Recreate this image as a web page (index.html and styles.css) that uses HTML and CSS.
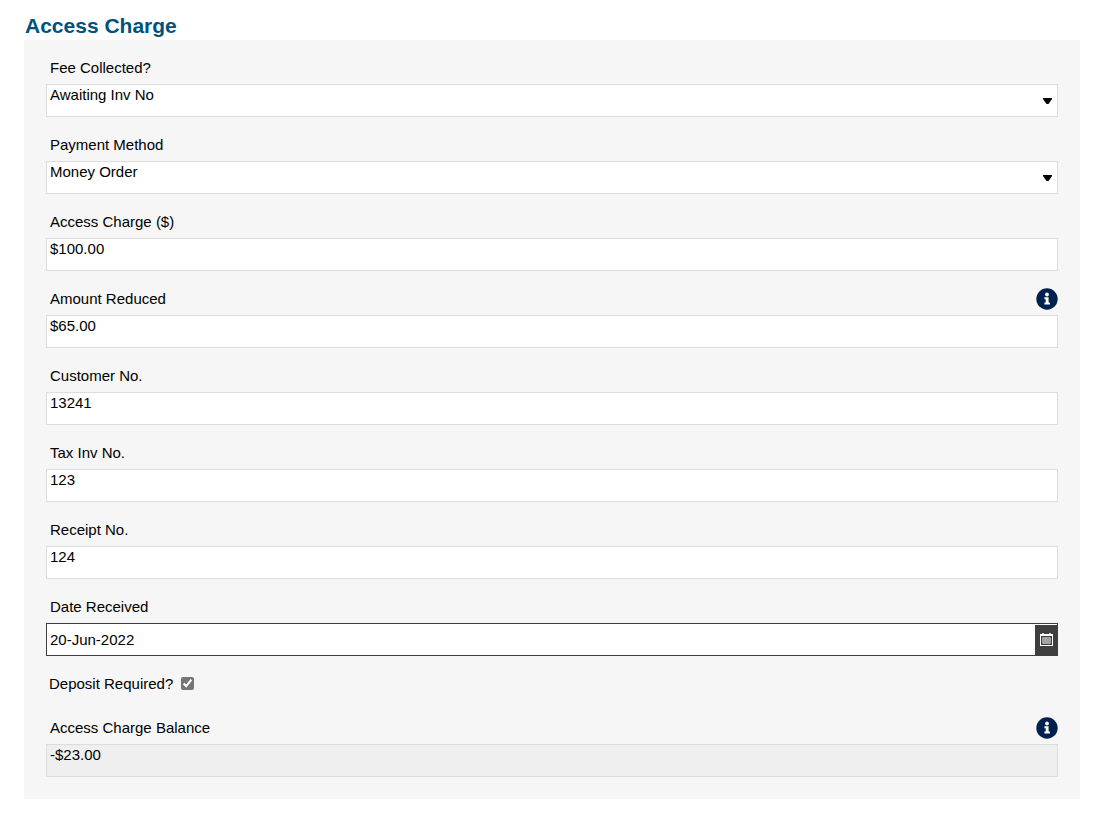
FILE: index.html
```html
<!DOCTYPE html>
<html lang="en">
<head>
    <meta charset="UTF-8">
    <meta name="viewport" content="width=device-width, initial-scale=1.0">
    <title>Access Charge</title>
    <link rel="stylesheet" href="styles.css">
</head>
<body>

<svg class="sprite" aria-hidden="true">
    <symbol id="arrow" viewBox="0 0 9 6">
        <path d="M0 0h9v1L5.500 6h-2L0 1z" fill="#000"/>
    </symbol>
    <symbol id="info" viewBox="0 0 22 22">
        <circle cx="11" cy="11" r="10.7" fill="#00204d"/>
        <circle cx="11" cy="6.500" r="1.900" fill="#fff"/>
        <path d="M8.400 9.200h4.200v5.300h1.300v2H8.400v-2h1.300v-3.300H8.400z" fill="#fff"/>
    </symbol>
    <symbol id="calendar" viewBox="0 0 13 13">
        <path d="M2 0h2v1H2zM9 0h2v1H9z" fill="#ccc"/>
        <path d="M0 1h13v12H0zM1 3v9h11V3z" fill="#fff" fill-rule="evenodd"/>
        <path d="M3 4h7v1h1v5h-1v1H3v-1H2V5h1z" fill="#a3a3a3"/>
        <path d="M2 4h1v1H2zM10 4h1v1h-1zM2 10h1v1H2zM10 10h1v1h-1z" fill="#777"/>
    </symbol>
</svg>

<form class="charge-form">
    <h2>Access Charge</h2>

    <div class="panel">
        <div class="field">
            <div class="label-row">
                <label for="feeCollected">Fee Collected?</label>
            </div>
            <div class="select-box">
                <select id="feeCollected">
                    <option>Awaiting Inv No</option>
                </select>
                <svg class="arrow"><use href="#arrow"/></svg>
            </div>
        </div>

        <div class="field">
            <div class="label-row">
                <label for="paymentMethod">Payment Method</label>
            </div>
            <div class="select-box">
                <select id="paymentMethod">
                    <option>Money Order</option>
                </select>
                <svg class="arrow"><use href="#arrow"/></svg>
            </div>
        </div>

        <div class="field">
            <div class="label-row">
                <label for="accessCharge">Access Charge ($)</label>
            </div>
            <input type="text" id="accessCharge" value="$100.00">
        </div>

        <div class="field">
            <div class="label-row">
                <label for="amountReduced">Amount Reduced</label>
                <button type="button" class="info" aria-label="About amount reduced"><svg><use href="#info"/></svg></button>
            </div>
            <input type="text" id="amountReduced" value="$65.00">
        </div>

        <div class="field">
            <div class="label-row">
                <label for="customerNo">Customer No.</label>
            </div>
            <input type="text" id="customerNo" value="13241">
        </div>

        <div class="field">
            <div class="label-row">
                <label for="taxInvNo">Tax Inv No.</label>
            </div>
            <input type="text" id="taxInvNo" value="123">
        </div>

        <div class="field">
            <div class="label-row">
                <label for="receiptNo">Receipt No.</label>
            </div>
            <input type="text" id="receiptNo" value="124">
        </div>

        <div class="field">
            <div class="label-row">
                <label for="dateReceived">Date Received</label>
            </div>
            <div class="date-box">
                <input type="text" id="dateReceived" value="20-Jun-2022">
                <button type="button" class="calendar" aria-label="Choose date"><svg><use href="#calendar"/></svg></button>
            </div>
        </div>

        <div class="check-row">
            <label for="depositRequired">Deposit Required?</label>
            <input type="checkbox" id="depositRequired" checked>
        </div>

        <div class="field">
            <div class="label-row">
                <label for="balance">Access Charge Balance</label>
                <button type="button" class="info" aria-label="About access charge balance"><svg><use href="#info"/></svg></button>
            </div>
            <input type="text" id="balance" value="-$23.00" readonly>
        </div>
    </div>
</form>

</body>
</html>
```
FILE: styles.css
```css
* {
    box-sizing: border-box;
}

body {
    margin: 0;
    background-color: #fff;
    color: #000;
    font-family: "Liberation Sans", Arial, sans-serif;
    font-size: 15px;
}

.sprite {
    display: none;
}

.charge-form {
    padding: 12px 18px 20px 24px;
}

h2 {
    margin: 0;
    padding-left: 1px;
    color: #00527d;
    font-size: 21px;
    line-height: 28px;
}

.panel {
    display: flex;
    flex-direction: column;
    gap: 17px;
    padding: 17px 22px 22px;
    background-color: #f6f6f6;
}

.label-row {
    display: flex;
    justify-content: space-between;
    height: 22px;
    margin-bottom: 5px;
    padding-left: 4px;
}

label {
    line-height: 21px;
}

input[type="text"],
select {
    display: block;
    width: 100%;
    height: 33px;
    margin: 0;
    padding: 0 3px 12px;
    border: 1px solid #ddd;
    border-radius: 0;
    background-color: #fff;
    color: #000;
    font: inherit;
}

select {
    appearance: none;
}

input[readonly] {
    background-color: #efefef;
}

.select-box {
    position: relative;
}

.arrow {
    position: absolute;
    right: 6px;
    top: 14px;
    width: 9px;
    height: 6px;
    pointer-events: none;
}

button {
    display: flex;
    align-items: center;
    justify-content: center;
    padding: 0;
    border: 0;
    background: none;
    cursor: pointer;
}

.info svg {
    width: 22px;
    height: 22px;
}

.date-box {
    display: flex;
    height: 33px;
    border: 1px solid #3f3f3f;
    background-color: #fff;
}

.date-box input[type="text"] {
    flex: 1;
    height: 31px;
    padding: 0 3px;
    border: 0;
}

.calendar {
    width: 22px;
    margin-top: 1px;
    padding-bottom: 1px;
    background-color: #3f3f3f;
}

.calendar svg {
    width: 13px;
    height: 13px;
}

.check-row {
    display: flex;
    gap: 8px;
    height: 22px;
    margin-bottom: 5px;
    padding-left: 3px;
}

.check-row input {
    width: 13px;
    height: 13px;
    margin: 4px 0;
    accent-color: #767676;
}
```
